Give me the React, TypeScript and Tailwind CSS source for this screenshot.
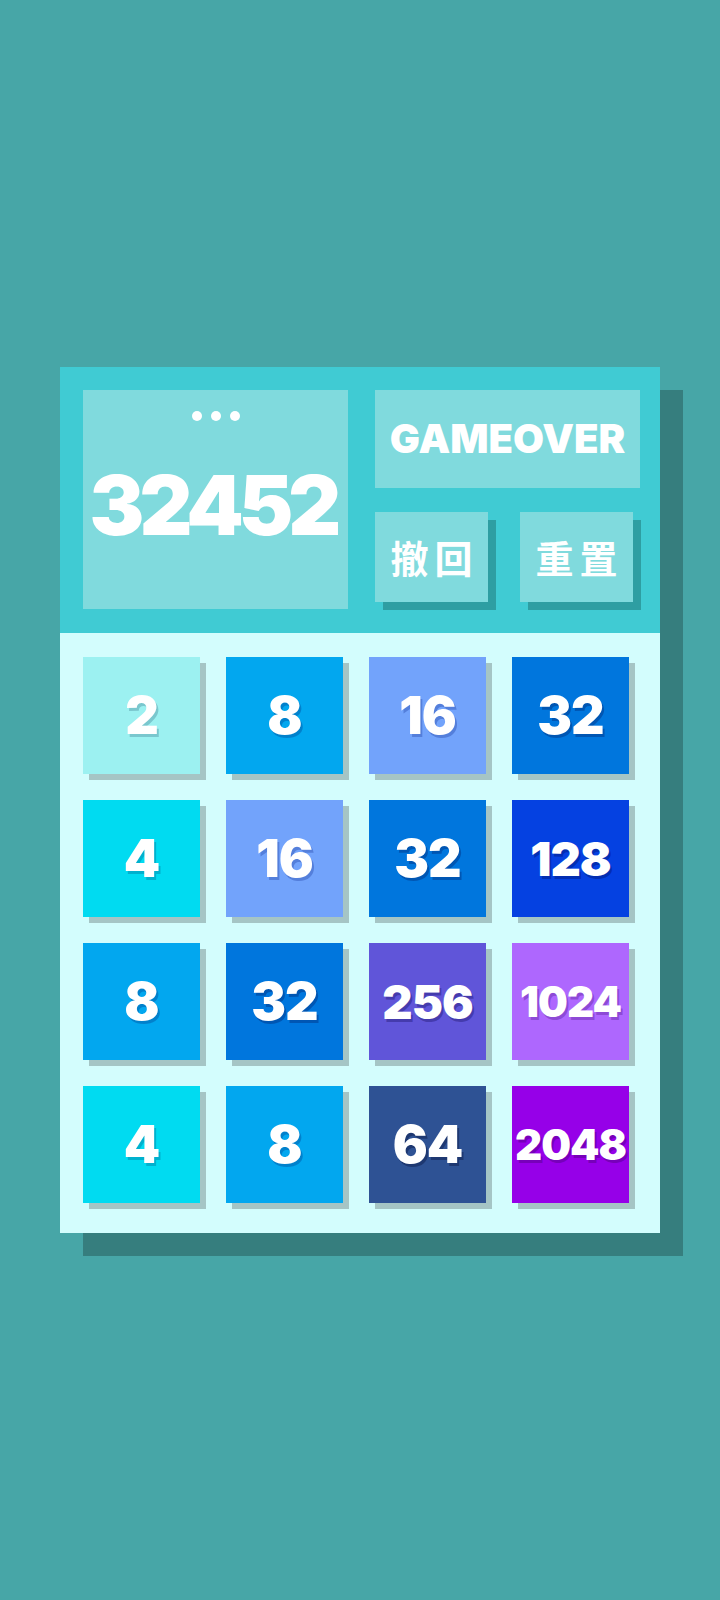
import React from "react";

const tileStyles: Record<number, string> = {
  2: "bg-[#9cf1f1] [text-shadow:2px_3px_0_rgba(60,120,140,0.35)]",
  4: "bg-[#00dbf1] [text-shadow:2px_3px_0_rgba(0,100,140,0.35)]",
  8: "bg-[#02a7ef] [text-shadow:2px_3px_0_rgba(0,60,140,0.35)]",
  16: "bg-[#72a3fb] [text-shadow:2px_3px_0_rgba(30,60,160,0.35)]",
  32: "bg-[#0076dd] [text-shadow:2px_3px_0_rgba(0,30,100,0.35)]",
  64: "bg-[#2e5294] [text-shadow:2px_3px_0_rgba(0,10,50,0.35)]",
  128: "bg-[#0541e1] [text-shadow:2px_3px_0_rgba(0,10,90,0.35)]",
  256: "bg-[#6055d9] [text-shadow:2px_3px_0_rgba(20,10,90,0.35)]",
  1024: "bg-[#ae67fe] [text-shadow:2px_3px_0_rgba(80,20,140,0.35)]",
  2048: "bg-[#9600e8] [text-shadow:2px_3px_0_rgba(60,0,100,0.35)]",
};

const sizeFor = (v: number) => {
  const len = String(v).length;
  if (len <= 2) return "text-[52px]";
  if (len === 3) return "text-[47px]";
  return "text-[42px]";
};

const board = [
  [2, 8, 16, 32],
  [4, 16, 32, 128],
  [8, 32, 256, 1024],
  [4, 8, 64, 2048],
];

function Tile({ v }: { v: number }) {
  return (
    <div
      className={`w-[117px] h-[117px] flex items-center justify-center text-white font-black shadow-[6px_6px_0_#a5c5c5] leading-none tracking-[-1px] ${tileStyles[v]} ${sizeFor(v)}`}
    >
      {v}
    </div>
  );
}

export default function App() {
  return (
    <div
      className="min-h-[1600px] w-full bg-[#47a6a7] flex items-center justify-center"
      style={{ fontFamily: '"Inter", "Noto Sans", "Noto Sans CJK SC", sans-serif' }}
    >
      <div className="w-[600px] shadow-[23px_23px_0_#367e7e]">
        {/* header */}
        <div className="h-[266px] bg-[#40cbd3] pl-[23px] pt-[23px] flex gap-[27px]">
          <div className="w-[265px] h-[219px] bg-[#80dadd] flex flex-col items-center">
            <div className="mt-[21px] flex gap-[9px]">
              <div className="w-[10px] h-[10px] rounded-full bg-white" />
              <div className="w-[10px] h-[10px] rounded-full bg-white" />
              <div className="w-[10px] h-[10px] rounded-full bg-white" />
            </div>
            <div className="mt-[44px] pr-[5px] text-white font-black text-[82px] leading-none tracking-[-5px]">
              32452
            </div>
          </div>
          <div className="w-[265px] flex flex-col">
            <div className="h-[98px] bg-[#80dadd] flex items-center justify-center text-white font-black text-[40px] leading-none">
              GAMEOVER
            </div>
            <div className="mt-[24px] flex gap-[32px]">
              <div
                className="w-[113px] h-[90px] bg-[#80dadd] shadow-[8px_8px_0_#2e9ea2] flex items-center justify-center gap-[6px] text-white font-semibold text-[38px] leading-none"
                style={{ fontFamily: '"Noto Sans CJK SC", sans-serif' }}
              >
                <span>撤</span>
                <span>回</span>
              </div>
              <div
                className="w-[113px] h-[90px] bg-[#80dadd] shadow-[8px_8px_0_#2e9ea2] flex items-center justify-center gap-[6px] text-white font-semibold text-[38px] leading-none"
                style={{ fontFamily: '"Noto Sans CJK SC", sans-serif' }}
              >
                <span>重</span>
                <span>置</span>
              </div>
            </div>
          </div>
        </div>
        {/* board */}
        <div className="h-[600px] bg-[#d3fdfd] pl-[23px] pt-[24px]">
          <div className="grid grid-cols-[repeat(4,117px)] gap-[26px]">
            {board.flat().map((v, i) => (
              <Tile key={i} v={v} />
            ))}
          </div>
        </div>
      </div>
    </div>
  );
}
